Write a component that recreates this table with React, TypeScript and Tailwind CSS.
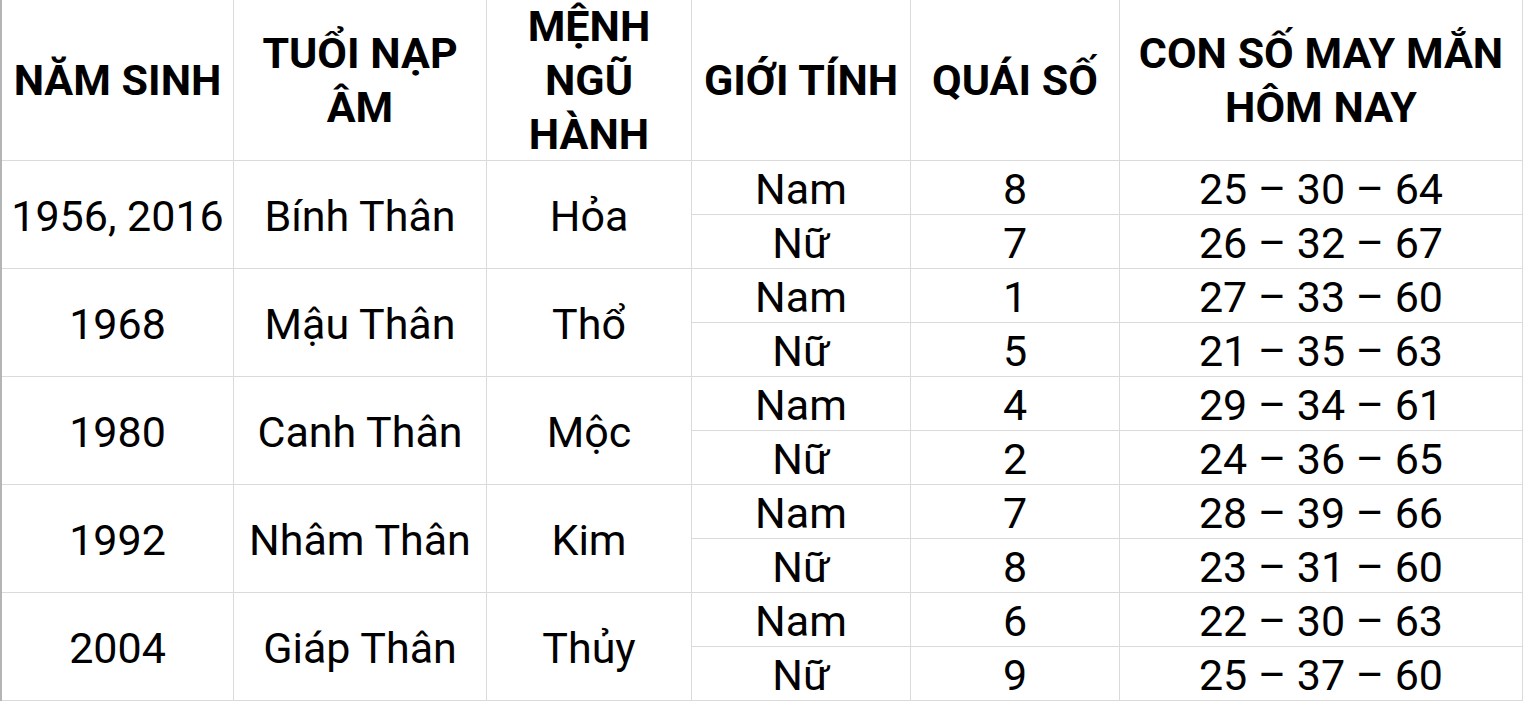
import React from 'react';

interface Row {
  gender: string;
  quai: string;
  lucky: string;
}

interface Group {
  year: string;
  tuoi: string;
  menh: string;
  rows: Row[];
}

const groups: Group[] = [
  {
    year: '1956, 2016',
    tuoi: 'Bính Thân',
    menh: 'Hỏa',
    rows: [
      { gender: 'Nam', quai: '8', lucky: '25 – 30 – 64' },
      { gender: 'Nữ', quai: '7', lucky: '26 – 32 – 67' },
    ],
  },
  {
    year: '1968',
    tuoi: 'Mậu Thân',
    menh: 'Thổ',
    rows: [
      { gender: 'Nam', quai: '1', lucky: '27 – 33 – 60' },
      { gender: 'Nữ', quai: '5', lucky: '21 – 35 – 63' },
    ],
  },
  {
    year: '1980',
    tuoi: 'Canh Thân',
    menh: 'Mộc',
    rows: [
      { gender: 'Nam', quai: '4', lucky: '29 – 34 – 61' },
      { gender: 'Nữ', quai: '2', lucky: '24 – 36 – 65' },
    ],
  },
  {
    year: '1992',
    tuoi: 'Nhâm Thân',
    menh: 'Kim',
    rows: [
      { gender: 'Nam', quai: '7', lucky: '28 – 39 – 66' },
      { gender: 'Nữ', quai: '8', lucky: '23 – 31 – 60' },
    ],
  },
  {
    year: '2004',
    tuoi: 'Giáp Thân',
    menh: 'Thủy',
    rows: [
      { gender: 'Nam', quai: '6', lucky: '22 – 30 – 63' },
      { gender: 'Nữ', quai: '9', lucky: '25 – 37 – 60' },
    ],
  },
];

const headers = ['NĂM SINH', 'TUỔI NẠP ÂM', 'MỆNH NGŨ HÀNH', 'GIỚI TÍNH', 'QUÁI SỐ', 'CON SỐ MAY MẮN HÔM NAY'];

const cell = 'flex items-center justify-center text-center border-r border-b border-[#dadada]';
const body = `${cell} pt-[3px] text-[43px]`;

const App: React.FC = () => {
  return (
    <div className="w-[1523px] h-[702px] overflow-hidden bg-white font-[Roboto,sans-serif] text-black">
      <div className="grid grid-cols-[232px_253px_205px_219px_209px_403px] grid-rows-[161px_repeat(10,54px)] border-l-2 border-[#b4b4b4]">
        {/* header */}
        {headers.map((h) => (
          <div key={h} className={`${cell} px-1 text-[43px] font-bold leading-[54px]`}>
            {h}
          </div>
        ))}

        {/* body */}
        {groups.map((g) => (
          <React.Fragment key={g.year}>
            <div className={`${body} row-span-2`}>{g.year}</div>
            <div className={`${body} row-span-2`}>{g.tuoi}</div>
            <div className={`${body} row-span-2`}>{g.menh}</div>
            <div className={body}>{g.rows[0].gender}</div>
            <div className={body}>{g.rows[0].quai}</div>
            <div className={body}>{g.rows[0].lucky}</div>
            <div className={body}>{g.rows[1].gender}</div>
            <div className={body}>{g.rows[1].quai}</div>
            <div className={body}>{g.rows[1].lucky}</div>
          </React.Fragment>
        ))}
      </div>
    </div>
  );
};

export default App;
